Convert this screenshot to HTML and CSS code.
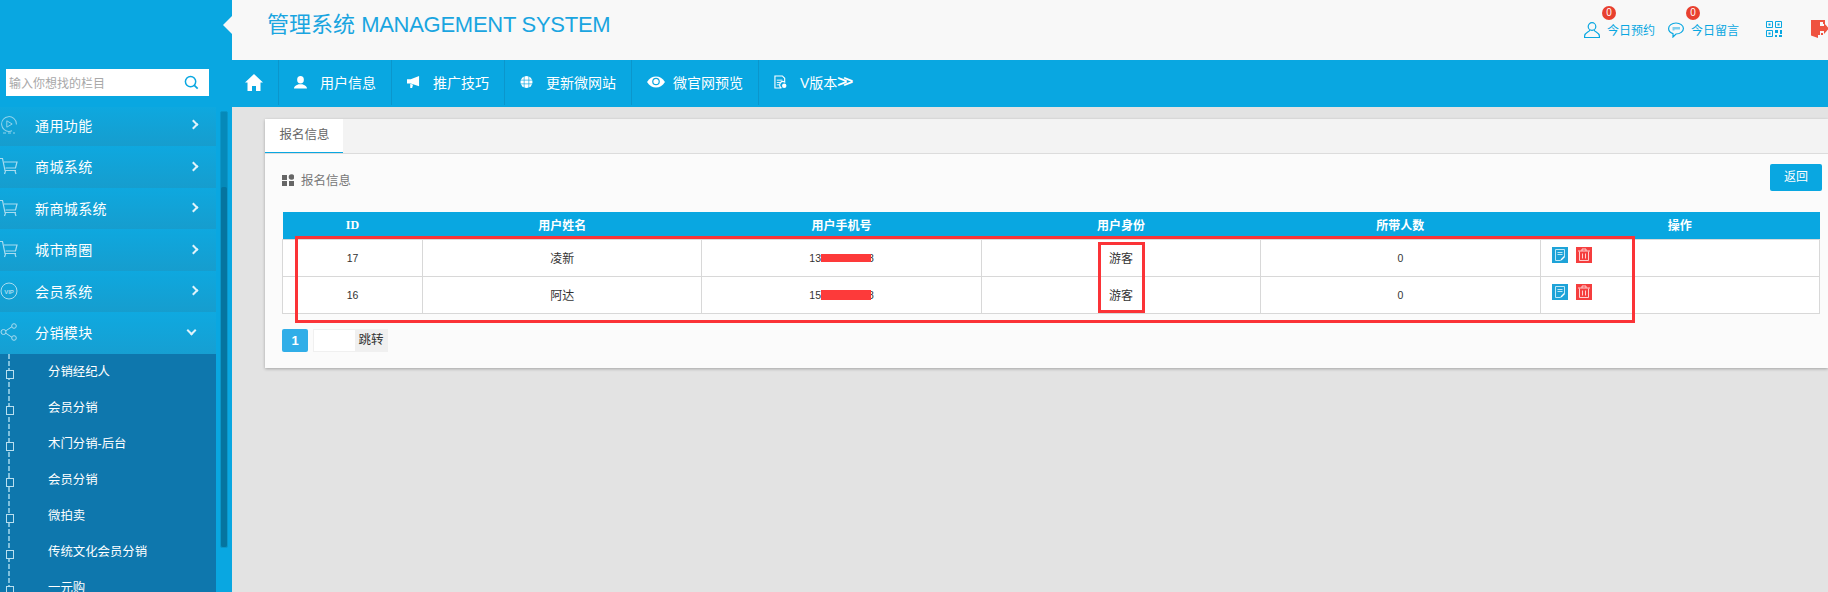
FILE: index.html
```html
<!DOCTYPE html>
<html lang="zh">
<head>
    <meta charset="utf-8">
    <title>报名信息</title>
    <link rel="stylesheet" href="styles.css">
</head>
<body>
<div class="page">
    <div class="side">
        <div class="side-top"></div>
        <div class="search">
            <div class="search-box">
                <span class="search-text">输入你想找的栏目</span>
                <svg class="search-icon" viewBox="0 0 16 16"><circle cx="7" cy="7" r="5.5" fill="none" stroke="#09a7e1" stroke-width="1.6"/><path d="M11 11l3.6 3.6" stroke="#09a7e1" stroke-width="1.8"/></svg>
            </div>
        </div>
        <div class="side-body">
            <div class="menu">
                <div class="m-item first">
                    <svg class="m-icon" viewBox="0 0 18 18"><circle cx="9" cy="8" r="7.4" fill="none" stroke="#8fd3ec" stroke-dasharray="30 8" transform="rotate(130 9 8)"/><path d="M6.8 4.8l5.4 3.2-5.4 3.2z" fill="none" stroke="#8fd3ec"/><path d="M3 17h3M8 17h3M13 17h2" stroke="#8fd3ec"/></svg>
                    <span class="m-text">通用功能</span><span class="m-arrow"></span>
                </div>
                <div class="m-item">
                    <svg class="m-icon" viewBox="0 0 18 18"><use href="#cart"/></svg>
                    <span class="m-text">商城系统</span><span class="m-arrow"></span>
                </div>
                <div class="m-item">
                    <svg class="m-icon" viewBox="0 0 18 18"><use href="#cart"/></svg>
                    <span class="m-text">新商城系统</span><span class="m-arrow"></span>
                </div>
                <div class="m-item">
                    <svg class="m-icon" viewBox="0 0 18 18"><use href="#cart"/></svg>
                    <span class="m-text">城市商圈</span><span class="m-arrow"></span>
                </div>
                <div class="m-item">
                    <svg class="m-icon" viewBox="0 0 18 18"><circle cx="9" cy="9" r="8" fill="none" stroke="#a9dcf0"/><text x="9" y="11.5" class="vip">VIP</text></svg>
                    <span class="m-text">会员系统</span><span class="m-arrow"></span>
                </div>
                <div class="m-item open">
                    <svg class="m-icon" viewBox="0 0 18 18"><path d="M4 9l9-6M4 9l9 6" stroke="#a9dcf0" fill="none"/><circle cx="3.5" cy="9" r="2.5" fill="#18a3d6" stroke="#a9dcf0"/><circle cx="14" cy="3" r="2.3" fill="#18a3d6" stroke="#a9dcf0"/><circle cx="14" cy="15" r="2.3" fill="#18a3d6" stroke="#a9dcf0"/></svg>
                    <span class="m-text">分销模块</span><span class="m-arrow down"></span>
                </div>
                <div class="sub">
                    <div class="s-item">分销经纪人</div>
                    <div class="s-item">会员分销</div>
                    <div class="s-item">木门分销-后台</div>
                    <div class="s-item">会员分销</div>
                    <div class="s-item">微拍卖</div>
                    <div class="s-item">传统文化会员分销</div>
                    <div class="s-item">一元购</div>
                </div>
            </div>
            <div class="scroll"><div class="scroll-thumb"></div></div>
        </div>
    </div>

    <div class="main">
        <div class="head">
            <span class="head-notch"></span>
            <h1 class="title">管理系统 <span class="title-en">MANAGEMENT SYSTEM</span></h1>
            <div class="tools">
                <div class="tool">
                    <span class="badge">0</span>
                    <svg class="tool-icon" viewBox="0 0 16 16"><circle cx="8" cy="4.500" r="3.800" fill="none" stroke="#09a7e1" stroke-width="1.200"/><path d="M5.800 8c0 2-5.200 2.500-5.200 6v1.500h14.800v-1.500c0-3.500-5.200-4-5.200-6" fill="none" stroke="#09a7e1" stroke-width="1.200"/></svg>
                    <span>今日预约</span>
                </div>
                <div class="tool">
                    <span class="badge">0</span>
                    <svg class="tool-icon" viewBox="0 0 16 16"><path d="M8 1c4.100 0 7.400 2.500 7.400 5.500s-3.300 5.500-7.400 5.500l-3 3v-3.400c-2.700-.9-4.400-2.900-4.400-5.100 0-3 3.300-5.500 7.400-5.500z" fill="none" stroke="#09a7e1" stroke-width="1.200"/><path d="M4.500 5h7.500v2.500h-5.500v1h-2z" fill="#7fcfee"/></svg>
                    <span>今日留言</span>
                </div>
                <svg class="qr" viewBox="0 0 16 16">
                    <path d="M.5.500h6v6h-6zM9.500.500h6v6h-6zM.5 9.500h6v6h-6z" fill="none" stroke="#09a7e1"/>
                    <path d="M2.500 2.500h2v2h-2zM11.500 2.500h2v2h-2zM2.500 11.500h2v2h-2z" fill="#09a7e1"/>
                    <path d="M9 9h3v3h-3zM14 9h2v4h-2zM9 14h2v2h-2zM13 14h3v2h-3z" fill="#09a7e1"/>
                </svg>
                <svg class="logout" viewBox="0 0 18 19"><path d="M0 1h14v4h-2v-2h-3v13h-2v3l-7-2.500z" fill="#ef5340"/><path d="M9 7h4v-3l5 5.500-5 5.500v-3h-4z" fill="#ef5340"/><path d="M10 14h2v2h-2z" fill="#ef5340"/></svg>
            </div>
        </div>

        <div class="nav">
            <div class="nav-item home">
                <svg class="home-icon" viewBox="0 0 18 17"><path d="M9 0l9 8.500h-2.500v8.500h-4.500v-5h-4v5h-4.500v-8.500h-2.500z" fill="#fff"/></svg>
            </div>
            <div class="nav-item">
                <svg class="nav-icon" viewBox="0 0 14 14"><ellipse cx="7" cy="4.500" rx="3.600" ry="4" fill="#fff"/><path d="M0 14c0-2.500 3-3.500 5-4.500h4c2 1 5 2 5 4.500z" fill="#fff"/></svg>
                <span>用户信息</span>
            </div>
            <div class="nav-item">
                <svg class="nav-icon" viewBox="0 0 14 14"><path d="M0 4h4l9-3.500v11l-9-3h-4z" fill="#fff"/><path d="M3.500 9l3 1-1 3.500h-2z" fill="#fff"/></svg>
                <span>推广技巧</span>
            </div>
            <div class="nav-item">
                <svg class="nav-icon" viewBox="0 0 14 14"><circle cx="7" cy="7" r="6.500" fill="#fff"/><path d="M.5 5h13M.5 9h13M4.500.5v13M9.500.5v13" stroke="#09a7e1" stroke-width=".7"/></svg>
                <span>更新微网站</span>
            </div>
            <div class="nav-item">
                <svg class="nav-eye" viewBox="0 0 18 12"><path d="M0 6c2.500-3.800 5.500-5.500 9-5.500s6.500 1.700 9 5.500c-2.500 3.800-5.500 5.500-9 5.500s-6.500-1.700-9-5.500z" fill="#fff"/><circle cx="9" cy="5.500" r="3.800" fill="#09a7e1"/><circle cx="9" cy="5.500" r="2.600" fill="#fff"/></svg>
                <span>微官网预览</span>
            </div>
            <div class="nav-item last">
                <svg class="nav-icon" viewBox="0 0 14 14"><path d="M1 .5h8l2.500 2.500v4a3.500 3.500 0 0 0-3.500 6.500h-7z" fill="none" stroke="#fff" stroke-width="1.200"/><path d="M3 5h6M3 7.500h4M3 10h3" stroke="#fff"/><circle cx="11" cy="11" r="2.400" fill="#fff"/></svg>
                <span>V版本</span><span class="nav-more">&gt;&gt;</span>
            </div>
        </div>

        <div class="content">
            <div class="card">
                <div class="tabs"><span class="tab">报名信息</span></div>
                <div class="card-body">
                    <div class="card-head">
                        <div class="card-title">
                            <svg class="grid-icon" viewBox="0 0 12 12"><path d="M0 1h5v5h-5zM0 7h5v5h-5zM7 7h5v5h-5z" fill="#666"/><circle cx="9.500" cy="3" r="2.800" fill="#666"/></svg>
                            <span>报名信息</span>
                        </div>
                        <a class="btn-back">返回</a>
                    </div>
                    <div class="mark-wrap">
                        <table class="list">
                            <thead>
                                <tr><th class="col-id">ID</th><th>用户姓名</th><th>用户手机号</th><th>用户身份</th><th>所带人数</th><th>操作</th></tr>
                            </thead>
                            <tbody>
                                <tr>
                                    <td class="num">17</td><td>凌新</td>
                                    <td class="num"><span class="phone">13<i class="mask"></i>8</span></td>
                                    <td>游客</td><td class="num">0</td>
                                    <td class="ops">
                                        <span class="op edit"><svg viewBox="0 0 16 16"><use href="#edit"/></svg></span>
                                        <span class="op del"><svg viewBox="0 0 16 16"><use href="#trash"/></svg></span>
                                    </td>
                                </tr>
                                <tr>
                                    <td class="num">16</td><td>阿达</td>
                                    <td class="num"><span class="phone">15<i class="mask tall"></i>8</span></td>
                                    <td>游客</td><td class="num">0</td>
                                    <td class="ops">
                                        <span class="op edit"><svg viewBox="0 0 16 16"><use href="#edit"/></svg></span>
                                        <span class="op del"><svg viewBox="0 0 16 16"><use href="#trash"/></svg></span>
                                    </td>
                                </tr>
                            </tbody>
                        </table>
                        <div class="mark-big"></div>
                        <div class="mark-small"></div>
                    </div>
                    <div class="pager">
                        <span class="page-cur">1</span>
                        <span class="page-jump"><span class="page-input"></span><span class="page-go">跳转</span></span>
                    </div>
                </div>
            </div>
        </div>
    </div>
</div>

<svg class="defs" width="0" height="0">
    <symbol id="cart" viewBox="0 0 18 18">
        <path d="M0 1.500h2.500l2.500 12h11M4 5h13l-1.500 6h-10" fill="none" stroke="#a9dcf0" stroke-width="1.200"/>
        <path d="M5.500 14l-1 3M15 14l1 3" stroke="#a9dcf0" stroke-width="1.200"/>
    </symbol>
    <symbol id="edit" viewBox="0 0 16 16">
        <path d="M3.500 2.500h9v7l-4 4h-5z" fill="none" stroke="#bfe8f7"/>
        <path d="M5.500 5.500h5M5.500 7.500h5" stroke="#bfe8f7"/>
        <path d="M9 13l3.500-3.500" stroke="#fff" stroke-width="1.500"/>
    </symbol>
    <symbol id="trash" viewBox="0 0 16 16">
        <path d="M2 4h12M6 4v-2h4v2M3.500 4.500v9h9v-9M6.500 6.500v5M9.500 6.500v5" fill="none" stroke="#ffd0d0"/>
    </symbol>
</svg>
</body>
</html>
```
FILE: styles.css
```css
*{margin: 0;padding: 0;box-sizing: border-box;}
html,body{height: 100%;overflow: hidden;}
body{font-family: "Liberation Sans","Noto Sans CJK SC",sans-serif;font-size: 12px;color: #333;background: #e3e3e3;}
.defs{display: block;}
.page{display: flex;height: 592px;}

.side{width: 232px;flex: none;background: #09a7e1;display: flex;flex-direction: column;overflow: hidden;}
.side-top{height: 60px;flex: none;}
.search{height: 47px;flex: none;padding: 9px 0 0 6px;}
.search-box{width: 203px;height: 27px;background: #fff;display: flex;align-items: center;justify-content: space-between;padding: 0 10px 0 3px;}
.search-text{font-size: 12px;color: #a8a8a8;}
.search-icon{width: 15px;height: 15px;}
.side-body{flex: 1;display: flex;min-height: 0;}
.menu{width: 216px;flex: none;}
.m-item{height: 41.5px;display: flex;align-items: center;background: linear-gradient(#0ea8df,#169dce);color: #fff;font-size: 14px;letter-spacing: .4px;position: relative;padding-bottom: 1px;}
.m-item.first{height: 39px;padding-bottom: 4px;}
.m-item.open{background: linear-gradient(#0fa9e0,#169fd2);}
.m-icon{width: 18px;height: 18px;flex: none;}
.m-text{margin-left: 17px;flex: 1;}
.m-arrow{width: 7px;height: 7px;border-top: 2px solid #dff3fb;border-right: 2px solid #dff3fb;transform: rotate(45deg);margin-right: 19px;}
.m-arrow.down{transform: rotate(135deg);margin-right: 21px;margin-top: -4px;}
.vip{font-size: 6px;font-weight: bold;fill: #a9dcf0;text-anchor: middle;font-family: "Liberation Sans",sans-serif;letter-spacing: 0;}
.sub{background-color: #0e77ad;background-image: linear-gradient(#7fc0dd 70%,transparent 70%);background-size: 2px 7px;background-position: 8px 0;background-repeat: repeat-y;}
.s-item{height: 36px;line-height: 36px;padding-left: 48px;color: #fff;font-size: 12.4px;position: relative;}
.s-item:before{content: "";position: absolute;left: 6px;top: 16px;width: 6px;height: 7px;border: 1px solid #b9dfef;background: #0e77ad;}
.scroll{width: 8px;margin: 4px 0 0 4px;height: 437px;background: #0589b9;border: 1px solid #0a96c9;border-radius: 2px;position: relative;}
.scroll-thumb{position: absolute;left: 0;right: 0;top: 75px;bottom: 0;background: #05749f;border-radius: 2px;}

.main{flex: 1;min-width: 0;display: flex;flex-direction: column;}
.head{height: 60px;flex: none;background: #f8f8f8;display: flex;align-items: flex-start;position: relative;}
.head-notch{position: absolute;left: -9px;top: 16px;border: 9px solid transparent;border-left: 0;border-right-color: #f8f8f8;}
.title{font-size: 22px;font-weight: normal;color: #1aa5e0;margin: 11px 0 0 35px;line-height: 28px;white-space: nowrap;}
.title-en{letter-spacing: -.27px;}
.tools{margin-left: auto;display: flex;align-items: flex-start;padding-top: 21px;margin-right: -1px;}
.tool{display: flex;align-items: center;position: relative;color: #09a7e1;font-size: 12px;margin-right: 13px;height: 17px;}
.tool-icon{width: 16px;height: 16px;margin-right: 7px;}
.badge{position: absolute;left: 18px;top: -15px;width: 14px;height: 14px;border-radius: 50%;background: #e8402f;color: #fff;font-size: 10px;line-height: 14px;text-align: center;}
.qr{width: 16px;height: 16px;margin-left: 14px;}
.logout{width: 18px;height: 19px;margin: -2px 0 0 29px;}

.nav{height: 47px;flex: none;background: #09a7e1;display: flex;align-items: stretch;}
.nav-item{display: flex;align-items: center;color: #fff;font-size: 14px;border-right: 1px solid #0b96cc;padding: 0 15px 2px 15px;margin-bottom: 2px;}
.nav-item.home{width: 47px;padding: 0 0 0 13px;}
.nav-item.last{border-right: 0;}
.home-icon{width: 18px;height: 17px;}
.nav-icon{width: 13px;height: 14px;margin-right: 13px;flex: none;}
.nav-eye{width: 18px;height: 12px;margin-right: 8px;flex: none;}
.nav-more{font-size: 17px;font-weight: bold;letter-spacing: -4px;line-height: 14px;}

.content{flex: 1;padding: 12px 0 0 33px;min-height: 0;}
.card{height: 249px;background: #fbfbfb;box-shadow: 0 1px 3px rgba(0,0,0,.28);}
.tabs{height: 35px;background: #f3f3f3;border-bottom: 1px solid #dcdcdc;}
.tab{display: inline-block;width: 78px;height: 34px;background: #fff;border-bottom: 1px solid #09a7e1;text-align: center;font-size: 12.5px;line-height: 33px;text-indent: 1px;color: #666;vertical-align: top;}
.card-body{padding: 10px 8px 0 17px;}
.card-head{height: 48px;display: flex;justify-content: space-between;align-items: flex-start;}
.card-title{display: flex;align-items: center;color: #777;font-size: 12.5px;padding-top: 6px;}
.grid-icon{width: 12px;height: 12px;margin-right: 7px;}
.btn-back{width: 52px;height: 27px;margin-right: -2px;background: #09a7e1;color: #fff;border-radius: 2px;text-align: center;line-height: 27px;font-size: 12px;}

.mark-wrap{position: relative;}
.list{width: 100%;border-collapse: collapse;table-layout: fixed;}
.list th{height: 27px;background: #09a7e1;color: #fff;font-size: 12px;font-family: "Liberation Serif","Noto Sans CJK SC",serif;font-weight: bold;}
.col-id{width: 140px;}
.list td{height: 37px;border: 1px solid #d8d8d8;background: #fff;text-align: center;color: #333;font-size: 12px;}
.list td.num{font-size: 10.5px;}
.list td.ops{text-align: left;padding: 0 0 5px 11px;}
.mask{display: inline-block;width: 50px;height: 8px;background: #fd3a3a;vertical-align: 0;margin-right: -3px;position: relative;}
.mask.tall{height: 10px;vertical-align: -1px;}
.op{display: inline-block;width: 16px;height: 16px;margin-right: 5px;vertical-align: middle;}
.op svg{display: block;width: 16px;height: 16px;}
.edit{background: #1ea3d8;}
.del{background: #f53e3e;}
.mark-big{position: absolute;left: 13px;top: 24px;width: 1340px;height: 87px;border: 3px solid #fb3337;}
.mark-small{position: absolute;left: 816px;top: 30px;width: 47px;height: 71px;border: 3px solid #fb3337;}

.pager{display: flex;margin-top: 15px;height: 23px;}
.page-cur{width: 26px;height: 23px;background: #30aee8;border-radius: 2px;color: #fff;font-weight: bold;font-size: 13px;line-height: 23px;text-align: center;}
.page-jump{display: flex;margin-left: 5px;border: 1px solid #f0f0f0;background: #f0f0f0;}
.page-input{width: 41px;background: #fff;}
.page-go{width: 32px;text-align: center;line-height: 21px;font-size: 12.5px;color: #333;}
```
